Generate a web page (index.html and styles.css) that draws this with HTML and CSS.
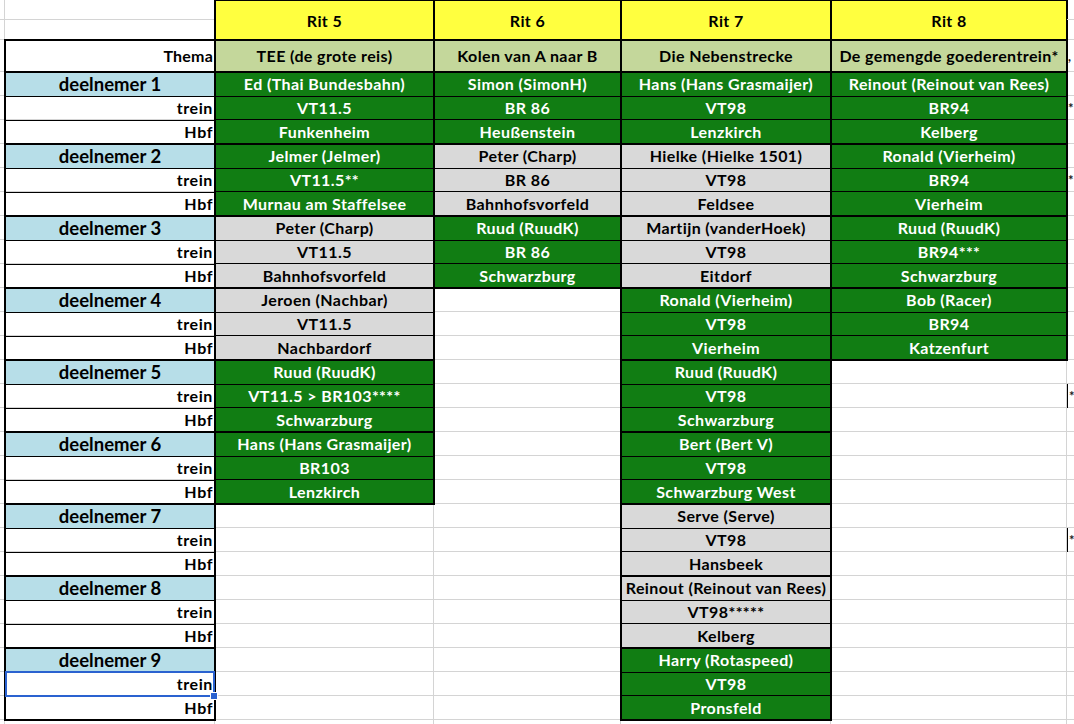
FILE: index.html
```html
<!DOCTYPE html>
<html lang="nl">
<head>
<meta charset="utf-8">
<title>Ritten 5–8</title>
<link rel="stylesheet" href="styles.css">
</head>
<body>
<div class="sheet">
  <div class="head">
    <div class="g gut r1"></div>
    <div class="g gut r2"></div>
    <div class="g gut r3"></div>
    <div class="g lab r1"></div>
    <div class="g lab r2"></div>
    <div class="box rit c5">Rit 5</div>
    <div class="box rit c6">Rit 6</div>
    <div class="box rit c7">Rit 7</div>
    <div class="box rit c8">Rit 8</div>
    <div class="g rest r1"></div>
    <div class="g rest r2"></div>
    <div class="g rest r3 mark">,</div>
    <div class="box thema-label lab">Thema</div>
    <div class="box thema c5">TEE (de grote reis)</div>
    <div class="box thema c6">Kolen van A naar B</div>
    <div class="box thema c7">Die Nebenstrecke</div>
    <div class="box thema c8">De gemengde goederentrein*</div>
  </div>

  <div class="body">
    <!-- deelnemers -->
    <div class="box person lab g1"><div class="cell name">deelnemer 1</div><div class="cell key">trein</div><div class="cell key">Hbf</div></div>
    <div class="box person lab g2"><div class="cell name">deelnemer 2</div><div class="cell key">trein</div><div class="cell key">Hbf</div></div>
    <div class="box person lab g3"><div class="cell name">deelnemer 3</div><div class="cell key">trein</div><div class="cell key">Hbf</div></div>
    <div class="box person lab g4"><div class="cell name">deelnemer 4</div><div class="cell key">trein</div><div class="cell key">Hbf</div></div>
    <div class="box person lab g5"><div class="cell name">deelnemer 5</div><div class="cell key">trein</div><div class="cell key">Hbf</div></div>
    <div class="box person lab g6"><div class="cell name">deelnemer 6</div><div class="cell key">trein</div><div class="cell key">Hbf</div></div>
    <div class="box person lab g7"><div class="cell name">deelnemer 7</div><div class="cell key">trein</div><div class="cell key">Hbf</div></div>
    <div class="box person lab g8"><div class="cell name">deelnemer 8</div><div class="cell key">trein</div><div class="cell key">Hbf</div></div>
    <div class="box person lab g9"><div class="cell name">deelnemer 9</div><div class="cell key sel">trein</div><div class="cell key">Hbf</div></div>

    <!-- Rit 5 -->
    <div class="box entry green c5 g1"><div class="cell">Ed (Thai Bundesbahn)</div><div class="cell">VT11.5</div><div class="cell">Funkenheim</div></div>
    <div class="box entry green c5 g2"><div class="cell">Jelmer (Jelmer)</div><div class="cell">VT11.5**</div><div class="cell">Murnau am Staffelsee</div></div>
    <div class="box entry grey c5 g3"><div class="cell">Peter (Charp)</div><div class="cell">VT11.5</div><div class="cell">Bahnhofsvorfeld</div></div>
    <div class="box entry grey c5 g4"><div class="cell">Jeroen (Nachbar)</div><div class="cell">VT11.5</div><div class="cell">Nachbardorf</div></div>
    <div class="box entry green c5 g5"><div class="cell">Ruud (RuudK)</div><div class="cell">VT11.5 &gt; BR103****</div><div class="cell">Schwarzburg</div></div>
    <div class="box entry green c5 g6"><div class="cell">Hans (Hans Grasmaijer)</div><div class="cell">BR103</div><div class="cell">Lenzkirch</div></div>

    <!-- Rit 6 -->
    <div class="box entry green c6 g1"><div class="cell">Simon (SimonH)</div><div class="cell">BR 86</div><div class="cell">Heußenstein</div></div>
    <div class="box entry grey c6 g2"><div class="cell">Peter (Charp)</div><div class="cell">BR 86</div><div class="cell">Bahnhofsvorfeld</div></div>
    <div class="box entry green c6 g3"><div class="cell">Ruud (RuudK)</div><div class="cell">BR 86</div><div class="cell">Schwarzburg</div></div>

    <!-- Rit 7 -->
    <div class="box entry green c7 g1"><div class="cell">Hans (Hans Grasmaijer)</div><div class="cell">VT98</div><div class="cell">Lenzkirch</div></div>
    <div class="box entry grey c7 g2"><div class="cell">Hielke (Hielke 1501)</div><div class="cell">VT98</div><div class="cell">Feldsee</div></div>
    <div class="box entry grey c7 g3"><div class="cell">Martijn (vanderHoek)</div><div class="cell">VT98</div><div class="cell">Eitdorf</div></div>
    <div class="box entry green c7 g4"><div class="cell">Ronald (Vierheim)</div><div class="cell">VT98</div><div class="cell">Vierheim</div></div>
    <div class="box entry green c7 g5"><div class="cell">Ruud (RuudK)</div><div class="cell">VT98</div><div class="cell">Schwarzburg</div></div>
    <div class="box entry green c7 g6"><div class="cell">Bert (Bert V)</div><div class="cell">VT98</div><div class="cell">Schwarzburg West</div></div>
    <div class="box entry grey c7 g7"><div class="cell">Serve (Serve)</div><div class="cell">VT98</div><div class="cell">Hansbeek</div></div>
    <div class="box entry grey c7 g8"><div class="cell">Reinout (Reinout van Rees)</div><div class="cell">VT98*****</div><div class="cell">Kelberg</div></div>
    <div class="box entry green c7 g9"><div class="cell">Harry (Rotaspeed)</div><div class="cell">VT98</div><div class="cell">Pronsfeld</div></div>

    <!-- Rit 8 -->
    <div class="box entry green c8 g1"><div class="cell">Reinout (Reinout van Rees)</div><div class="cell">BR94</div><div class="cell">Kelberg</div></div>
    <div class="box entry green c8 g2"><div class="cell">Ronald (Vierheim)</div><div class="cell">BR94</div><div class="cell">Vierheim</div></div>
    <div class="box entry green c8 g3"><div class="cell">Ruud (RuudK)</div><div class="cell">BR94***</div><div class="cell">Schwarzburg</div></div>
    <div class="box entry green c8 g4"><div class="cell">Bob (Racer)</div><div class="cell">BR94</div><div class="cell">Katzenfurt</div></div>

    <!-- overflow of the next column -->
    <div class="rest mark t1">*</div>
    <div class="rest mark t2">*</div>
    <div class="rest mark edged t5">*</div>
    <div class="rest mark edged t7">*</div>
  </div>
</div>
</body>
</html>
```

FILE: styles.css
```css
* { box-sizing: border-box; }

html, body {
  margin: 0;
  background: #fff;
}

body {
  width: 1074px;
  height: 724px;
  overflow: hidden;
  font-family: "Lato", "Liberation Sans", sans-serif;
  font-weight: 700;
  font-size: 16px;
  letter-spacing: 0.4px;
  color: #000;
}

.head,
.body {
  display: grid;
  grid-template-columns: 5px 210px 219px 187px 210px 236px 7px;
}

.head {
  grid-template-rows: 20px 20px 32px;
  height: 72px;
}

.body {
  grid-template-rows: repeat(27, 24px) 4px;
  height: 652px;
  background-image:
    linear-gradient(to right,
      transparent 0 4px, #d4d4d4 4px 5px,
      transparent 5px 214px, #d4d4d4 214px 215px,
      transparent 215px 433px, #d4d4d4 433px 434px,
      transparent 434px 620px, #d4d4d4 620px 621px,
      transparent 621px 830px, #d4d4d4 830px 831px,
      transparent 831px 1066px, #d4d4d4 1066px 1067px,
      transparent 1067px),
    repeating-linear-gradient(to bottom, transparent 0 23px, #d4d4d4 23px 24px);
}

/* columns */
.gut  { grid-column: 1; }
.lab  { grid-column: 2; }
.c5   { grid-column: 3; }
.c6   { grid-column: 4; }
.c7   { grid-column: 5; }
.c8   { grid-column: 6; }
.rest { grid-column: 7; }

/* header rows */
.r1 { grid-row: 1; }
.r2 { grid-row: 2; }
.r3 { grid-row: 3; }

/* participant groups (3 rows each) */
.g1 { grid-row: 1 / span 3; }
.g2 { grid-row: 4 / span 3; }
.g3 { grid-row: 7 / span 3; }
.g4 { grid-row: 10 / span 3; }
.g5 { grid-row: 13 / span 3; }
.g6 { grid-row: 16 / span 3; }
.g7 { grid-row: 19 / span 3; }
.g8 { grid-row: 22 / span 3; }
.g9 { grid-row: 25 / span 3; }

.t1 { grid-row: 2; }
.t2 { grid-row: 5; }
.t5 { grid-row: 14; }
.t7 { grid-row: 20; }

/* plain grid cells in the header */
.g {
  border-bottom: 1px solid #d4d4d4;
}
.gut.g { border-right: 1px solid #d4d4d4; }

/* bordered boxes: border centred on the grid line */
.box {
  border: 2px solid #000;
  margin: -1px;
  display: flex;
  flex-direction: column;
  min-width: 0;
  white-space: nowrap;
}

.rit {
  grid-row: 1 / span 2;
  background: #ffff3f;
  align-items: center;
  justify-content: center;
}

.thema {
  grid-row: 3;
  background: #c4d79b;
  align-items: center;
  justify-content: center;
  padding-bottom: 2px;
}

.thema-label {
  grid-row: 3;
  align-items: flex-end;
  justify-content: center;
  padding-right: 1px;
  padding-bottom: 2px;
  letter-spacing: 0.2px;
}

.cell {
  flex: 1 1 0;
  display: flex;
  align-items: center;
  justify-content: center;
  border-top: 1px solid #000;
  white-space: nowrap;
  padding-bottom: 1px;
}
.cell:first-child { border-top: 0; }

.person .name {
  background: #b7dee8;
  font-size: 18.5px;
  letter-spacing: 0;
}
.person .key {
  justify-content: flex-end;
  padding-right: 1px;
  letter-spacing: 0.6px;
}

.green { background: #117d13; color: #fff; }
.grey  { background: #d9d9d9; color: #000; }

/* selected cell */
.sel {
  position: relative;
  outline: 2px solid #2a62d0;
  outline-offset: -1px;
}
.sel::after {
  content: "";
  position: absolute;
  right: -4px;
  bottom: -4px;
  width: 6px;
  height: 6px;
  background: #2a62d0;
  border: 1px solid #fff;
  z-index: 1;
}

/* text spilling from the next column */
.mark {
  display: flex;
  align-items: center;
  padding-left: 1px;
  overflow: hidden;
  font-size: 13px;
  letter-spacing: 0;
  color: #1a1a1a;
}
.edged { border-left: 1px solid #000; }
```
